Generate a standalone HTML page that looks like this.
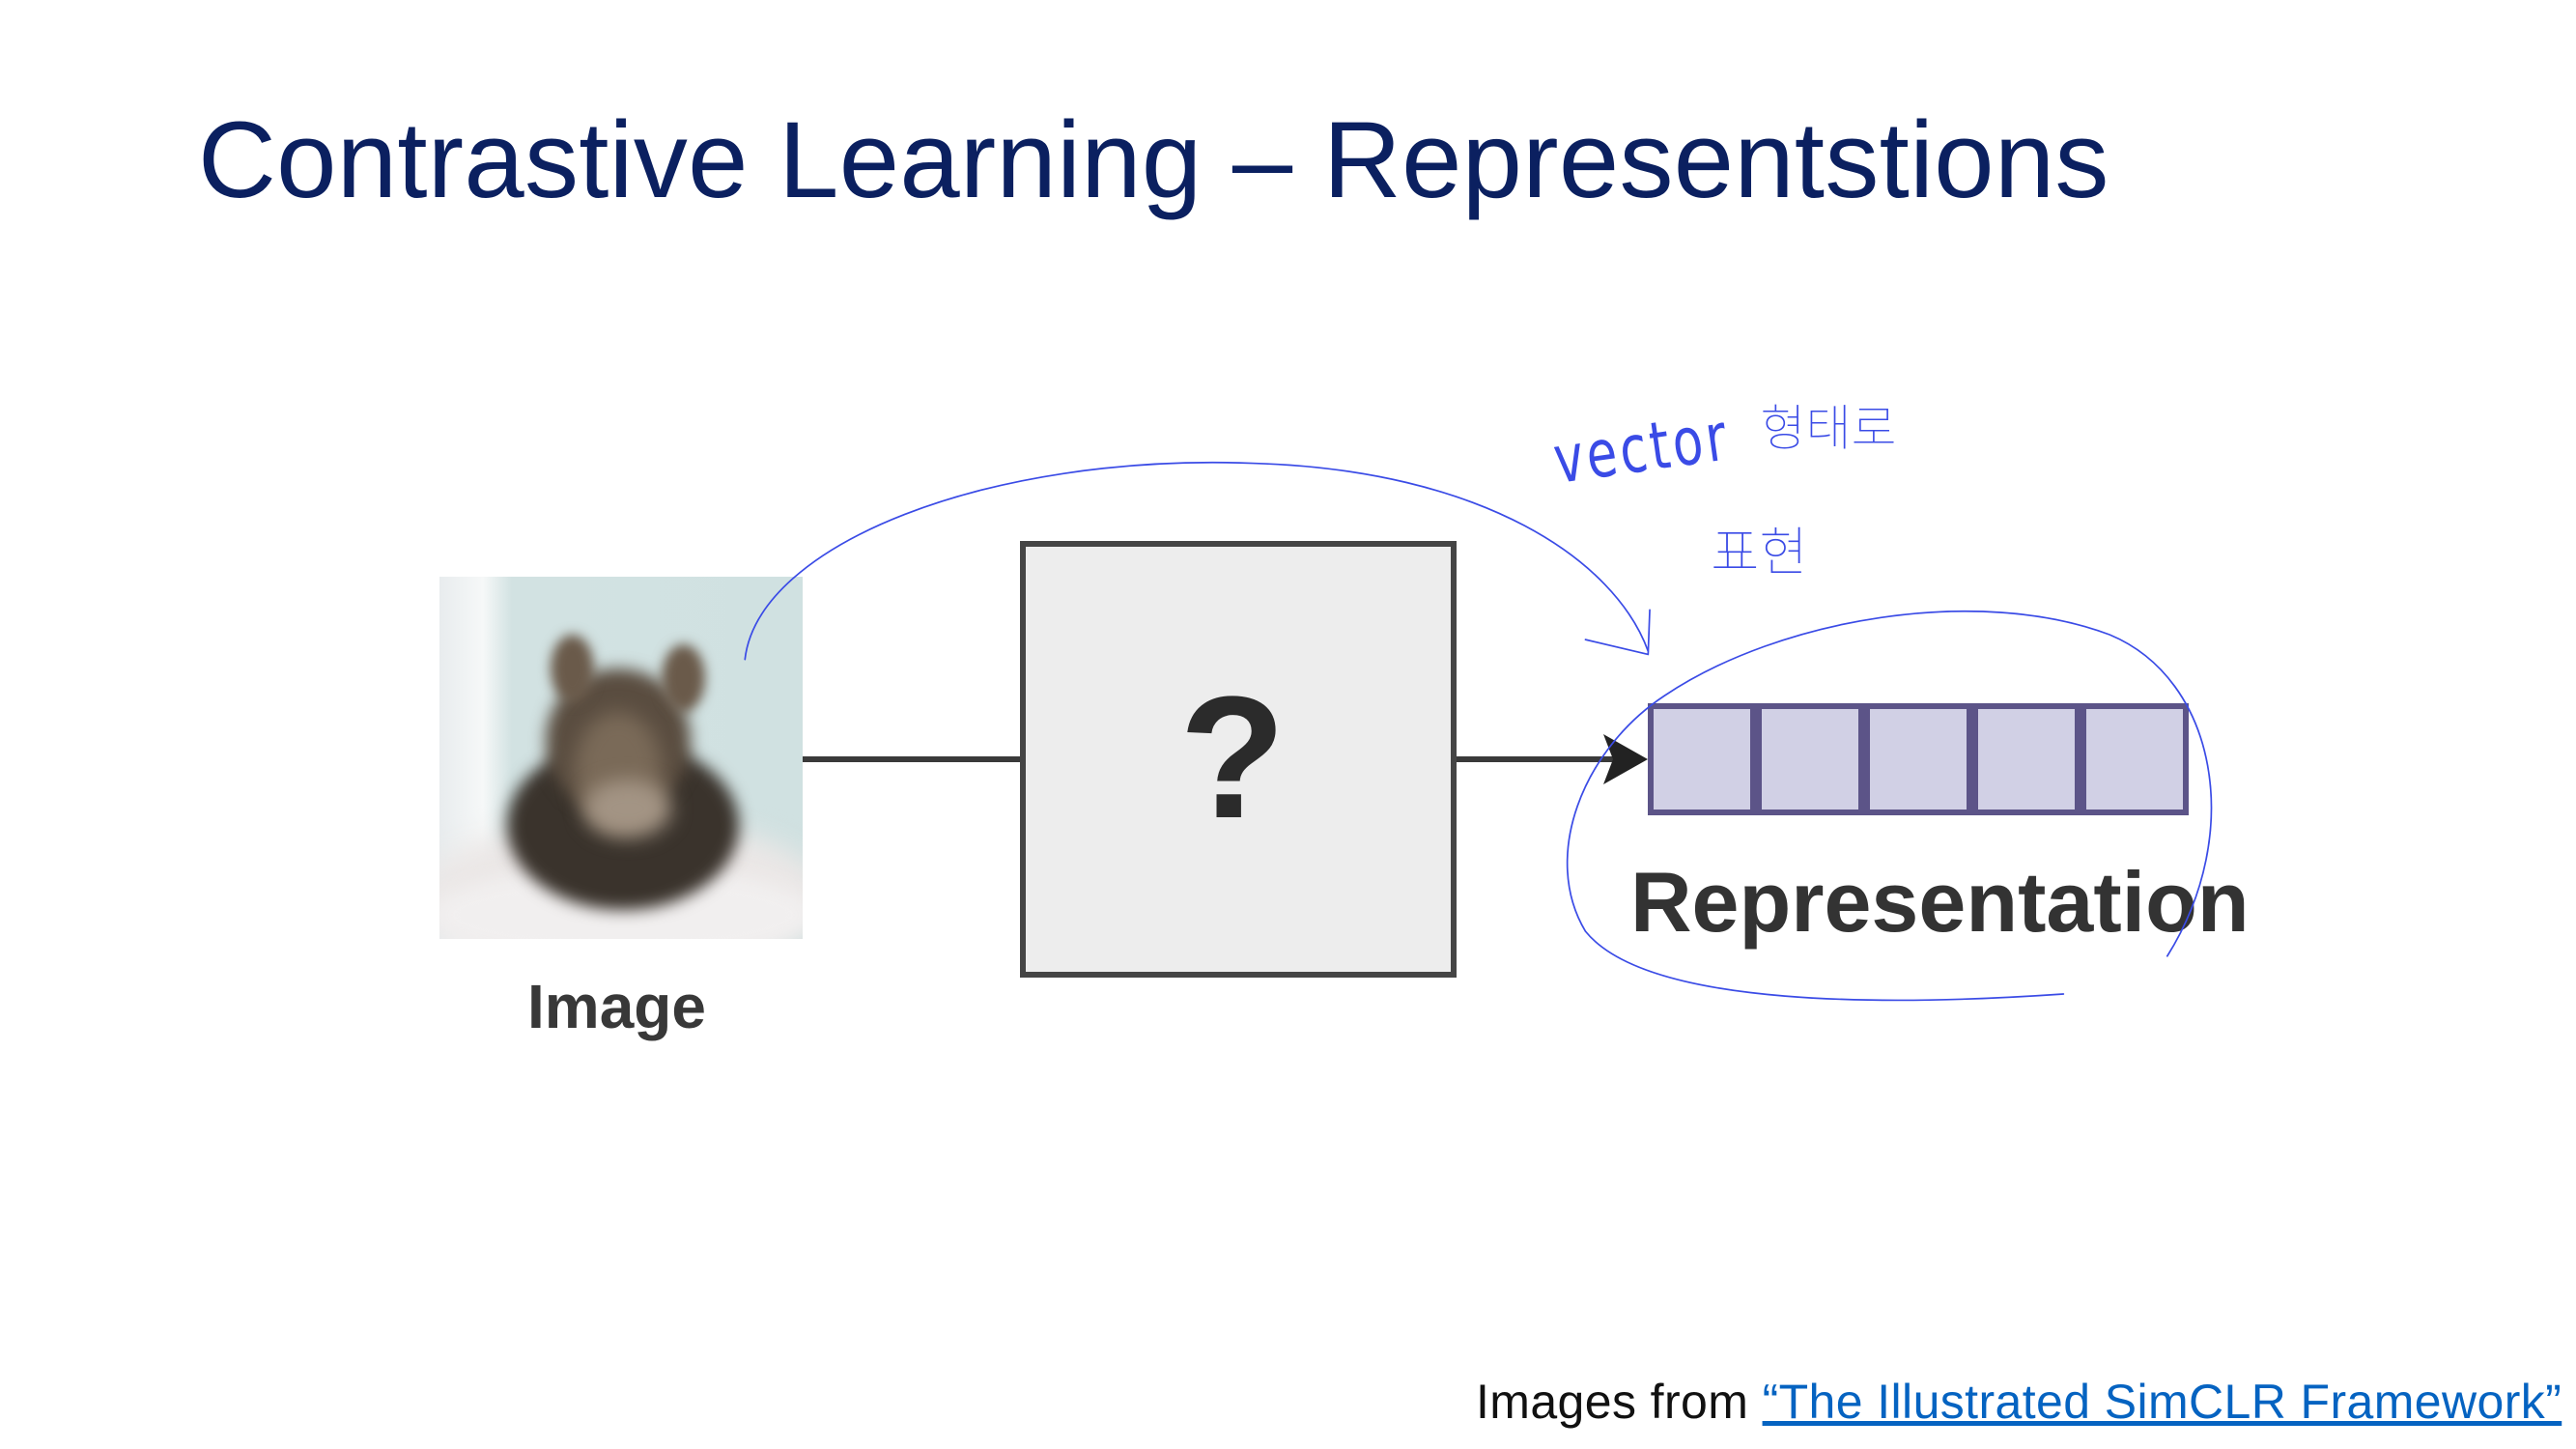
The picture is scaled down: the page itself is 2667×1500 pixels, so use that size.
<!DOCTYPE html>
<html><head><meta charset="utf-8"><style>
html,body{margin:0;padding:0;background:#fff;}
body{width:2667px;height:1500px;position:relative;overflow:hidden;font-family:"Liberation Sans",sans-serif;}
.abs{position:absolute;}
#title{left:205px;top:110px;font-size:112px;color:#0b2060;white-space:nowrap;line-height:1;letter-spacing:0.3px;}
#cat{left:455px;top:597px;width:376px;height:375px;overflow:hidden;
background:linear-gradient(to right, #e8ecee 0px, #f6f8f8 45px, #d2e2e2 75px, #d0e1e1 376px);}
.blob{position:absolute;border-radius:50%;filter:blur(10px);}
#box{left:1056px;top:560px;width:440px;height:440px;border:6px solid #454545;background:#ededed;}
#q{left:1050px;top:695px;width:452px;text-align:center;font-size:180px;font-weight:bold;color:#2b2b2b;line-height:1;}
.line{height:6px;background:#3a3a3a;top:783px;}
.cell{top:728px;width:100px;height:104px;border:6px solid #5c5488;background:#d1d0e5;}
#rep{left:1688px;top:890px;font-size:88px;font-weight:bold;color:#333;white-space:nowrap;line-height:1;}
#img{left:546px;top:1010px;font-size:64px;font-weight:bold;color:#383838;line-height:1;}
#foot{left:1528px;top:1426px;font-size:50px;color:#111;white-space:nowrap;line-height:1;letter-spacing:0.4px;}
#foot span{color:#0563c1;text-decoration:underline;}
</style></head><body>
<div id="title" class="abs">Contrastive Learning – Representstions</div>
<div id="cat" class="abs">
  <div class="blob" style="left:-20px;top:250px;width:420px;height:160px;background:#ebe7e6;filter:blur(14px)"></div>
  <div class="blob" style="left:-10px;top:300px;width:400px;height:100px;background:#f1efef;filter:blur(10px)"></div>
  <div class="blob" style="left:70px;top:170px;width:240px;height:175px;background:#3a332c;filter:blur(8px)"></div>
  <div class="blob" style="left:110px;top:95px;width:150px;height:150px;background:#5a4d40;filter:blur(8px)"></div>
  <div class="blob" style="left:140px;top:140px;width:90px;height:120px;background:#7a6a58;filter:blur(10px)"></div>
  <div class="blob" style="left:115px;top:60px;width:45px;height:70px;background:#6a5a4a;filter:blur(6px)"></div>
  <div class="blob" style="left:230px;top:70px;width:45px;height:70px;background:#6a5a4a;filter:blur(6px)"></div>
  <div class="blob" style="left:150px;top:210px;width:90px;height:60px;background:#a39484;filter:blur(10px)"></div>
</div>
<div class="abs line" style="left:831px;width:225px;"></div>
<div id="box" class="abs"></div>
<div id="q" class="abs">?</div>
<div class="abs line" style="left:1508px;width:170px;"></div>
<svg class="abs" style="left:1660px;top:760px" width="50" height="52"><polygon points="0,0 46,26 0,52 10,26" fill="#222"/></svg>
<div class="abs cell" style="left:1706px"></div>
<div class="abs cell" style="left:1818px"></div>
<div class="abs cell" style="left:1930px"></div>
<div class="abs cell" style="left:2042px"></div>
<div class="abs cell" style="left:2154px"></div>
<div id="rep" class="abs">Representation</div>
<div id="img" class="abs">Image</div>
<div id="foot" class="abs">Images from <span>“The Illustrated SimCLR Framework”</span></div>
<svg class="abs" style="left:0;top:0" width="2667" height="1500" viewBox="0 0 1563 879">
<g fill="none" stroke="#3a4be6" stroke-width="1" stroke-linecap="round">
<path d="M452,400 C460,330 600,275 760,281 C900,285 980,340 1000,395"/>
<path d="M962,388 L1000,397 M1001,370 L1000,397"/>
<path d="M1252,603 C1150,610 1000,612 962,565 C935,520 960,455 1010,422 C1080,375 1200,355 1280,385 C1345,412 1362,505 1315,580"/>
</g>
<g fill="#3a4be6" font-weight="normal">
<text x="945" y="293" font-family="DejaVu Sans, sans-serif" font-size="40" transform="rotate(-8 945 293) scale(0.75 1) translate(315 0)" textLength="140">vector</text>
<text x="1068" y="270" font-family="Noto Sans CJK KR, sans-serif" font-weight="100" font-size="30">형태로</text>
<text x="1038" y="346" font-family="Noto Sans CJK KR, sans-serif" font-weight="100" font-size="32">표현</text>
</g>
</svg>
</body></html>
